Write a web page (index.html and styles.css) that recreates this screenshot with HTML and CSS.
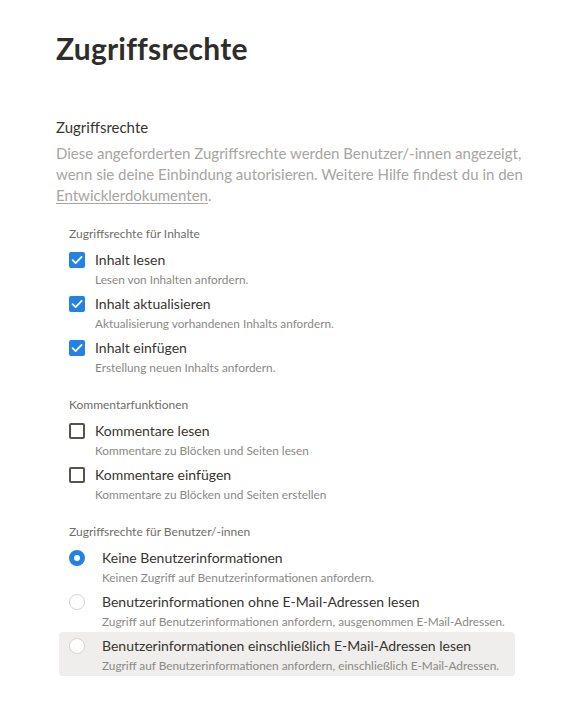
FILE: index.html
```html
<!DOCTYPE html>
<html lang="de">
<head>
<meta charset="utf-8">
<link rel="stylesheet" href="styles.css">
</head>
<body>
<main class="page">
  <h1 class="title">Zugriffsrechte</h1>
  <section class="section">
    <h2 class="section-title">Zugriffsrechte</h2>
    <p class="section-desc">Diese angeforderten Zugriffsrechte werden Benutzer/-innen angezeigt, wenn sie deine Einbindung autorisieren. Weitere Hilfe findest du in den <a class="link" href="#">Entwicklerdokumenten</a>.</p>

    <div class="group">
      <div class="group-label">Zugriffsrechte für Inhalte</div>
      <div class="item">
        <span class="check checked"><svg viewBox="0 0 16 16" width="16" height="16"><path d="M3.6 8.2 L6.6 11.1 L12.6 4.9" fill="none" stroke="#fff" stroke-width="1.8" stroke-linecap="round" stroke-linejoin="round"/></svg></span>
        <div class="item-text"><div class="item-label">Inhalt lesen</div><div class="item-desc">Lesen von Inhalten anfordern.</div></div>
      </div>
      <div class="item">
        <span class="check checked"><svg viewBox="0 0 16 16" width="16" height="16"><path d="M3.6 8.2 L6.6 11.1 L12.6 4.9" fill="none" stroke="#fff" stroke-width="1.8" stroke-linecap="round" stroke-linejoin="round"/></svg></span>
        <div class="item-text"><div class="item-label">Inhalt aktualisieren</div><div class="item-desc">Aktualisierung vorhandenen Inhalts anfordern.</div></div>
      </div>
      <div class="item">
        <span class="check checked"><svg viewBox="0 0 16 16" width="16" height="16"><path d="M3.6 8.2 L6.6 11.1 L12.6 4.9" fill="none" stroke="#fff" stroke-width="1.8" stroke-linecap="round" stroke-linejoin="round"/></svg></span>
        <div class="item-text"><div class="item-label">Inhalt einfügen</div><div class="item-desc">Erstellung neuen Inhalts anfordern.</div></div>
      </div>
    </div>

    <div class="group">
      <div class="group-label">Kommentarfunktionen</div>
      <div class="item">
        <span class="check"></span>
        <div class="item-text"><div class="item-label">Kommentare lesen</div><div class="item-desc">Kommentare zu Blöcken und Seiten lesen</div></div>
      </div>
      <div class="item">
        <span class="check"></span>
        <div class="item-text"><div class="item-label">Kommentare einfügen</div><div class="item-desc">Kommentare zu Blöcken und Seiten erstellen</div></div>
      </div>
    </div>

    <div class="group">
      <div class="group-label">Zugriffsrechte für Benutzer/-innen</div>
      <div class="item radio-item">
        <span class="radio selected"></span>
        <div class="item-text"><div class="item-label">Keine Benutzerinformationen</div><div class="item-desc">Keinen Zugriff auf Benutzerinformationen anfordern.</div></div>
      </div>
      <div class="item radio-item">
        <span class="radio"></span>
        <div class="item-text"><div class="item-label">Benutzerinformationen ohne E-Mail-Adressen lesen</div><div class="item-desc">Zugriff auf Benutzerinformationen anfordern, ausgenommen E-Mail-Adressen.</div></div>
      </div>
      <div class="item radio-item hovered">
        <span class="radio"></span>
        <div class="item-text"><div class="item-label">Benutzerinformationen einschließlich E-Mail-Adressen lesen</div><div class="item-desc">Zugriff auf Benutzerinformationen anfordern, einschließlich E-Mail-Adressen.</div></div>
      </div>
    </div>
  </section>
</main>
</body>
</html>
```
FILE: styles.css
```css
* { box-sizing: border-box; }
html, body { margin: 0; padding: 0; background: #fff; }
body {
  font-family: Lato, "Open Sans", sans-serif;
  color: #37352f;
}
.page {
  width: 569px;
  padding: 28px 40px 40px 56px;
}
.title {
  margin: 0;
  font-size: 30px;
  font-weight: 700;
  line-height: 40px;
  color: #2f2d29;
  letter-spacing: 0.2px;
}
.section { margin-top: 49px; }
.section-title {
  margin: 0;
  font-size: 15px;
  font-weight: 400;
  line-height: 20px;
  color: #37352f;
}
.section-desc {
  margin: 6px 0 0 0;
  font-size: 15px;
  line-height: 21px;
  color: #a6a5a1;
  width: 472px;
}
.link { color: #a6a5a1; text-decoration: underline; text-underline-offset: 2px; }
.group {
  margin: 20px 0 0 3px;
  width: 456px;
  display: flex;
  flex-direction: column;
}
.group + .group { margin-top: 19px; }
.group-label {
  padding: 0 10px;
  font-size: 12px;
  line-height: 16px;
  color: #6f6e69;
  margin-bottom: 4px;
}
.item {
  display: flex;
  align-items: flex-start;
  gap: 10px;
  padding: 4px 10px;
  border-radius: 4px;
  height: 44px;
}
.item-text { display: flex; flex-direction: column; }
.item-label { font-size: 14px; line-height: 20px; color: #37352f; }
.item-desc { font-size: 11.8px; line-height: 16px; color: #8a8985; margin-top: 2px; }
.check {
  width: 16px; height: 16px;
  margin-top: 2px;
  flex: none;
  border: 2px solid #55534e;
  border-radius: 2px;
  display: flex;
}
.check.checked { background: #2383e2; border: none; }
.radio-item { gap: 17px; }
.radio {
  width: 16px; height: 16px;
  margin-top: 2px;
  flex: none;
  border-radius: 50%;
  border: 1.5px solid #d6d5d2;
  background: #fff;
}
.radio.selected {
  border: 5px solid #2383e2;
  background: #fff;
}
.hovered { background: #efeeec; }
```
